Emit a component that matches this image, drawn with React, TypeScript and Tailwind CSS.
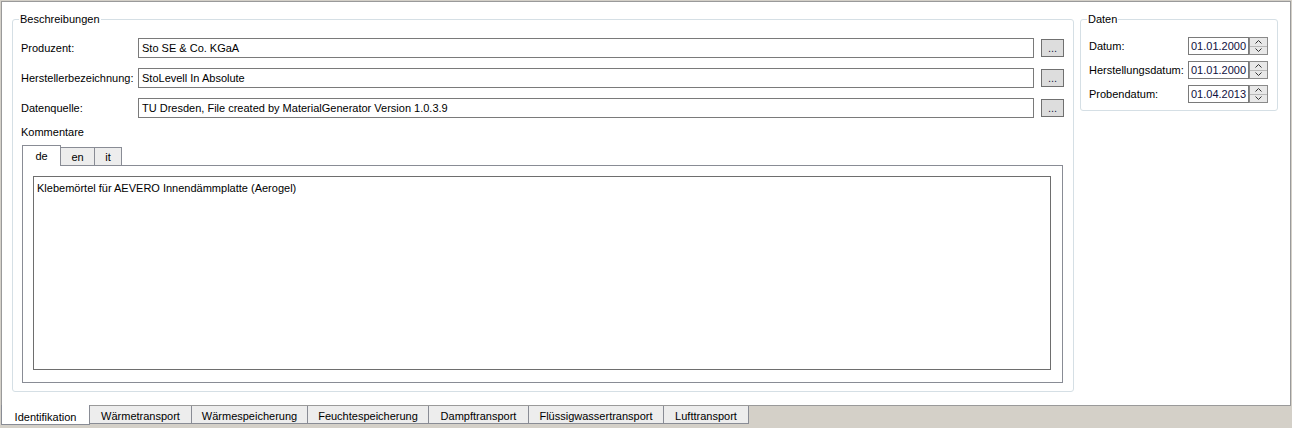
import React from "react";

const font = "font-['Liberation_Sans',Arial,sans-serif]";

function Group({ title, className, children }: { title: string; className: string; children: React.ReactNode }) {
  return (
    <div className={"relative border border-[#d5dfe5] rounded-[3px] " + className}>
      <span className="absolute left-[6px] -top-[7px] px-[1px] bg-white leading-[13px]">{title}</span>
      {children}
    </div>
  );
}

function TextRow({ label, value }: { label: string; value: string }) {
  return (
    <div className="flex items-center h-[20px]">
      <div className="w-[117px] shrink-0">{label}</div>
      <div className="flex-1 h-[20px] border border-[#7a7a7a] bg-white flex items-center pl-[3px] whitespace-nowrap">
        {value}
      </div>
      <div className="ml-[7px] w-[23px] h-[18px] shrink-0 border border-[#707070] bg-[#dddddd] flex items-end justify-center pb-[2px] leading-none text-[#1a1a4a]">
        ...
      </div>
    </div>
  );
}

function Spin() {
  return (
    <div className="w-[19px] h-[18px] border border-[#8a8a8a] bg-[#e8e8e8] flex flex-col">
      <div className="flex-1 flex items-center justify-center border-b border-[#b8b8b8]">
        <svg width="7" height="4" viewBox="0 0 7 4">
          <polyline points="0.5,3.5 3.5,0.5 6.5,3.5" fill="none" stroke="#333" strokeWidth="1" />
        </svg>
      </div>
      <div className="flex-1 flex items-center justify-center">
        <svg width="7" height="4" viewBox="0 0 7 4">
          <polyline points="0.5,0.5 3.5,3.5 6.5,0.5" fill="none" stroke="#333" strokeWidth="1" />
        </svg>
      </div>
    </div>
  );
}

function DateRow({ label, value }: { label: string; value: string }) {
  return (
    <div className="flex items-center h-[18px]">
      <div className="flex-1 whitespace-nowrap">{label}</div>
      <div className="w-[61px] h-[18px] border border-[#7a7a7a] bg-white flex items-center pl-[2px] text-[11px] text-[#101040] whitespace-nowrap overflow-hidden">
        {value}
      </div>
      <Spin />
    </div>
  );
}

export default function App() {
  const tabs = [
    { t: "Wärmetransport", w: "w-[102px]" },
    { t: "Wärmespeicherung", w: "w-[116px]" },
    { t: "Feuchtespeicherung", w: "w-[121px]" },
    { t: "Dampftransport", w: "w-[100px]" },
    { t: "Flüssigwassertransport", w: "w-[135px]" },
    { t: "Lufttransport", w: "w-[85px]" },
  ];
  return (
    <div className={"w-[1292px] h-[428px] bg-[#d4d0c8] flex flex-col text-[11px] leading-[13px] text-black " + font}>
      <div className="mt-[1px] ml-[1px] w-[1290px] h-[405px] bg-white border border-[#9a9a9a] flex gap-[6px] pl-[10px] pr-[12px] pt-[17px]">
        <Group title="Beschreibungen" className="flex-1 h-[373px] flex flex-col pt-[18px] pl-[8px] pr-[9px] pb-[8px]">
          <div className="flex flex-col gap-[10px]">
            <TextRow label="Produzent:" value="Sto SE & Co. KGaA" />
            <TextRow label="Herstellerbezeichnung:" value="StoLevell In Absolute" />
            <TextRow label="Datenquelle:" value="TU Dresden, File created by MaterialGenerator Version 1.0.3.9" />
          </div>
          <div className="mt-[8px]">Kommentare</div>
          <div className="mt-[6px] mx-[1px] flex-1 flex flex-col">
            <div className="flex items-end h-[20px]">
              <div className="relative z-10 -mb-[1px] w-[39px] h-[21px] bg-white border-x border-t border-[#898c95] flex justify-center pt-[4px]">
                de
              </div>
              <div className="w-[34px] h-[18px] bg-[#ededed] border-t border-r border-[#898c95] flex justify-center pt-[3px]">
                en
              </div>
              <div className="w-[27px] h-[18px] bg-[#ededed] border-t border-r border-[#898c95] flex justify-center pt-[3px]">
                it
              </div>
            </div>
            <div className="flex-1 border border-[#898c95] pt-[10px] pl-[10px] pr-[11px] pb-[12px] flex">
              <div className="flex-1 border border-[#6e6e6e] pl-[3px] pt-[5px]">
                Klebemörtel für AEVERO Innendämmplatte (Aerogel)
              </div>
            </div>
          </div>
        </Group>
        <Group title="Daten" className="w-[198px] h-[92px] self-start pt-[17px] pl-[8px] pr-[9px] flex flex-col gap-[6px]">
          <DateRow label="Datum:" value="01.01.2000" />
          <DateRow label="Herstellungsdatum:" value="01.01.2000" />
          <DateRow label="Probendatum:" value="01.04.2013" />
        </Group>
      </div>
      <div className="flex items-start ml-[1px]">
        <div className="relative z-10 -mt-[1px] w-[89px] h-[20px] bg-white border-x border-b border-[#898c95] flex justify-center pt-[6px]">
          Identifikation
        </div>
        {tabs.map((x) => (
          <div
            key={x.t}
            className={"h-[18px] bg-[#ededed] border-r border-b border-[#898c95] flex justify-center pt-[4px] whitespace-nowrap " + x.w}
          >
            {x.t}
          </div>
        ))}
      </div>
    </div>
  );
}
